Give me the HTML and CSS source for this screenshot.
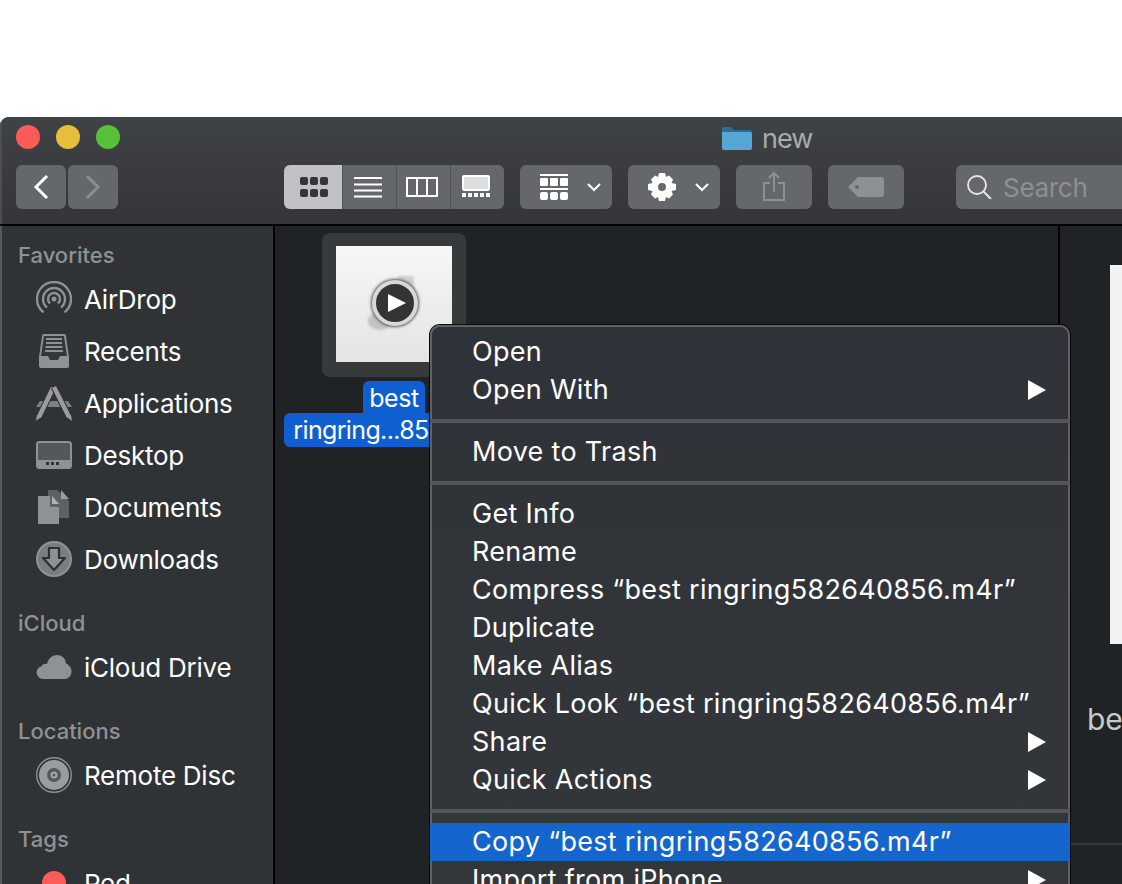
FILE: index.html
```html
<!DOCTYPE html>
<html lang="en">
<head>
<meta charset="utf-8">
<title>new</title>
<link rel="stylesheet" href="styles.css">
</head>
<body>
<div class="window">
  <header class="titlebar">
    <div class="title-row">
      <span class="light red"></span><span class="light yellow"></span><span class="light green"></span>
      <div class="title">
        <svg class="folder" viewBox="0 0 30 24"><path d="M0 3a2 2 0 0 1 2-2h7l3 3h16a2 2 0 0 1 2 2v2H0z" fill="#2d6f94"/><path d="M0 6h28a2 2 0 0 1 2 2v14a2 2 0 0 1-2 2H2a2 2 0 0 1-2-2z" fill="#56a7d4"/></svg>
        <span>new</span>
      </div>
    </div>
    <div class="toolbar">
      <div class="nav-group">
        <button class="btn nav"><svg class="i-nav" viewBox="0 0 16 26"><path d="M14 2 3 13l11 11" fill="none" stroke="#fff" stroke-width="3"/></svg></button>
        <button class="btn nav"><svg class="i-nav" viewBox="0 0 16 26"><path d="m2 2 11 11L2 24" fill="none" stroke="#8b8d8f" stroke-width="3"/></svg></button>
      </div>
      <div class="views">
        <button class="view active"><svg class="i-view" viewBox="0 0 32 24"><g fill="#33363a"><rect x="2" y="2" width="8" height="8" rx="2"/><rect x="12" y="2" width="8" height="8" rx="2"/><rect x="22" y="2" width="8" height="8" rx="2"/><rect x="2" y="14" width="8" height="8" rx="2"/><rect x="12" y="14" width="8" height="8" rx="2"/><rect x="22" y="14" width="8" height="8" rx="2"/></g></svg></button>
        <button class="view"><svg class="i-view" viewBox="0 0 32 24"><path d="M2 3h28M2 9.500h28M2 15.500h28M2 21.500h28" stroke="#fff" stroke-width="2"/></svg></button>
        <button class="view"><svg class="i-view" viewBox="0 0 32 24"><path d="M1 3h30v18H1zM11 3v18M21 3v18" fill="none" stroke="#fff" stroke-width="2"/></svg></button>
        <button class="view"><svg class="i-view" viewBox="0 0 32 24"><rect x="3" y="1" width="26" height="14" rx="1" fill="#dcdee0" stroke="#fff" stroke-width="2"/><g fill="#fff"><rect x="2" y="18" width="4" height="4"/><rect x="8" y="18" width="4" height="4"/><rect x="14" y="18" width="4" height="4"/><rect x="20" y="18" width="4" height="4"/><rect x="26" y="18" width="4" height="4"/></g></svg></button>
      </div>
      <button class="btn drop first-drop">
        <svg class="i-arr" viewBox="0 0 28 26"><g fill="#fff"><rect x="0" y="0" width="28" height="2"/><rect x="0" y="4" width="8" height="8" rx="1"/><rect x="10" y="4" width="8" height="8" rx="1"/><rect x="20" y="4" width="8" height="8" rx="1"/><rect x="0" y="14" width="28" height="2"/><rect x="0" y="18" width="8" height="8" rx="2"/><rect x="10" y="18" width="8" height="8" rx="2"/><rect x="20" y="18" width="8" height="8" rx="2"/></g></svg>
        <svg class="i-chev" viewBox="0 0 14 9"><path d="m1 1 6 6 6-6" fill="none" stroke="#fff" stroke-width="2"/></svg>
      </button>
      <button class="btn drop">
        <svg class="i-gear" viewBox="0 0 28 28"><path fill="#fff" fill-rule="evenodd" d="M11 0h6l1 4 3-1.500 4 4L23.500 10l4.500 1v6l-4.500 1 1.500 3.500-4 4L18 24l-1 4h-6l-1-4-3 1.500-4-4L4.500 18 0 17v-6l4.500-1L3 6.500l4-4L10 4zM14 10a4 4 0 1 0 0 8 4 4 0 0 0 0-8z"/></svg>
        <svg class="i-chev" viewBox="0 0 14 9"><path d="m1 1 6 6 6-6" fill="none" stroke="#fff" stroke-width="2"/></svg>
      </button>
      <button class="btn dim"><svg class="i-share" viewBox="0 0 22 30"><path d="M7 12H1v17h20V12h-6M11 21V2M6 7l5-5 5 5" fill="none" stroke="#8e9193" stroke-width="2"/></svg></button>
      <button class="btn dim"><svg class="i-tag" viewBox="0 0 36 20"><path fill="#8e9193" fill-rule="evenodd" d="M10 0h23a3 3 0 0 1 3 3v14a3 3 0 0 1-3 3H10L0 10zM9 8a2 2 0 1 0 0 4 2 2 0 0 0 0-4z"/></svg></button>
      <div class="search">
        <svg class="i-search" viewBox="0 0 26 24"><circle cx="10" cy="10" r="9" fill="none" stroke="#e6e7e8" stroke-width="1.800"/><path d="m16 16 8 8" stroke="#e6e7e8" stroke-width="2"/></svg>
        <span>Search</span>
      </div>
    </div>
  </header>

  <div class="body">
    <nav class="sidebar">
      <h2 class="sec">Favorites</h2>
      <ul class="list">
        <li class="item"><svg class="ico" viewBox="0 0 36 36"><g fill="none" stroke="#8f9295" stroke-width="2.400"><path d="M7.500 31.400A17 17 0 1 1 28.500 31.400"/><path d="M11 26.500A11 11 0 1 1 25 26.500"/><path d="M14 22.500A6 6 0 1 1 22 22.500"/></g><circle cx="18" cy="18" r="2.500" fill="#8f9295"/></svg>AirDrop</li>
        <li class="item"><svg class="ico" viewBox="0 0 36 36"><path fill="#8f9295" d="M6 3a2 2 0 0 1 2-2h20a2 2 0 0 1 2 2l3 21v9a2 2 0 0 1-2 2H5a2 2 0 0 1-2-2v-9z"/><path fill="#33363a" d="M8 3h20l3 20h-7l-2 4H14l-2-4H5z"/><path stroke="#8f9295" stroke-width="2" d="M10 6h16M10 10h16M9.500 14h17M9 18h18"/></svg>Recents</li>
        <li class="item"><svg class="ico" viewBox="0 0 36 36"><path fill="#7d8083" d="M4 16h28l4 6H0z"/><g fill="none" stroke-linecap="butt"><path d="M17 3 3 32" stroke="#303336" stroke-width="6.500"/><path d="M17 3 3 32" stroke="#9a9d9f" stroke-width="4.500"/><path d="M18 2 33 32" stroke="#303336" stroke-width="6.500"/><path d="M18 2 33 32" stroke="#9a9d9f" stroke-width="4.500"/></g><path fill="#9a9d9f" d="M1 30l4 2-5 4zM35 30l-4 2 5 4z"/></svg>Applications</li>
        <li class="item"><svg class="ico ico-desk" viewBox="0 0 36 28"><rect x="1" y="1" width="34" height="26" rx="2.500" fill="#55585b" stroke="#8f9295" stroke-width="2"/><path d="M1 19h34v5a3 3 0 0 1-3 3H4a3 3 0 0 1-3-3z" fill="#8f9295"/><path d="M10 21h3v3h-3zM15 21h3v3h-3zM20 21h3v3h-3z" fill="#303336"/></svg>Desktop</li>
        <li class="item"><svg class="ico" viewBox="0 0 36 36"><path fill="#5e6164" d="M12 1h9l12 11v17H12z"/><path fill="#9a9d9f" d="M25 1v9h8z"/><path fill="#8f9295" d="M2 7h12v11h9v17H2z"/><path fill="#b1b3b5" d="M16 7l7 8h-7z"/></svg>Documents</li>
        <li class="item"><svg class="ico" viewBox="0 0 36 36"><circle cx="18" cy="18" r="17" fill="#7a7d80" stroke="#8f9295" stroke-width="2"/><path d="M13 7h10v10h6L18 29 7 17h6z" fill="#8f9295" stroke="#2d3033" stroke-width="2.200" stroke-linejoin="round"/></svg>Downloads</li>
      </ul>
      <h2 class="sec">iCloud</h2>
      <ul class="list">
        <li class="item"><svg class="ico ico-cloud" viewBox="0 0 36 26"><path fill="#8f9295" d="M7 25a6.500 6.500 0 0 1-1.500-12.800C7 10 9 9.500 11 10c1-5 5-9 10-9 5 0 8.500 3.500 9 8.500 3 1.500 5.500 4 5.500 8 0 4-3 7.500-7 7.500z"/></svg>iCloud Drive</li>
      </ul>
      <h2 class="sec">Locations</h2>
      <ul class="list">
        <li class="item"><svg class="ico" viewBox="0 0 36 36"><circle cx="18" cy="18" r="17.300" fill="#303336" stroke="#8f9295" stroke-width="1.400"/><circle cx="18" cy="18" r="15" fill="#9a9d9f"/><circle cx="18" cy="18" r="7" fill="#55585b"/><circle cx="18" cy="18" r="3.500" fill="#a5a7a9"/><circle cx="18" cy="18" r="1.500" fill="#55585b"/></svg>Remote Disc</li>
      </ul>
      <h2 class="sec">Tags</h2>
      <ul class="list">
        <li class="item"><span class="tagdot"></span>Red</li>
      </ul>
    </nav>

    <main class="files">
      <figure class="file">
        <div class="tile">
          <div class="thumb">
            <span class="note-a"></span><span class="note-b"></span>
            <span class="play"><svg class="i-play" viewBox="0 0 18 18"><path d="M0 0l18 9L0 18z" fill="#fff"/></svg></span>
          </div>
        </div>
        <figcaption class="label"><span class="l1">best</span><span class="l2">ringring...856.m4r</span></figcaption>
      </figure>
    </main>

    <aside class="preview">
      <div class="sheet"></div>
      <div class="fname">best ringring582640856.m4r</div>
      <div class="rule"></div>
    </aside>
  </div>

  <ul class="menu">
    <li class="mi">Open</li>
    <li class="mi sub">Open With</li>
    <li class="sep"></li>
    <li class="mi">Move to Trash</li>
    <li class="sep"></li>
    <li class="mi">Get Info</li>
    <li class="mi">Rename</li>
    <li class="mi">Compress “best ringring582640856.m4r”</li>
    <li class="mi">Duplicate</li>
    <li class="mi">Make Alias</li>
    <li class="mi">Quick Look “best ringring582640856.m4r”</li>
    <li class="mi sub">Share</li>
    <li class="mi sub">Quick Actions</li>
    <li class="sep"></li>
    <li class="mi hl">Copy “best ringring582640856.m4r”</li>
    <li class="mi sub">Import from iPhone</li>
  </ul>
</div>
</body>
</html>
```

FILE: styles.css
```css
* { box-sizing: border-box; }
html, body { margin: 0; height: 100%; overflow: hidden; background: #fff; }
body { padding-top: 117px; font-family: Inter, "Liberation Sans", sans-serif; }
button { border: 0; padding: 0; margin: 0; font: inherit; }
ul { list-style: none; margin: 0; padding: 0; }
svg { display: block; }

.window { position: relative; width: 1122px; height: 767px; overflow: hidden; border-radius: 9px 0 0 0; background: #303336; }

.titlebar { height: 109px; border-bottom: 2px solid #000; background: linear-gradient(#404346, #333537); box-shadow: inset 2px 0 0 #4c4f52; }
.title-row { height: 48px; display: flex; align-items: center; padding-left: 16px; gap: 16px; }
.light { flex: none; width: 24px; height: 24px; border-radius: 50%; margin-top: -8px; }
.red { background: #fc5b57; }
.yellow { background: #e5bf3c; }
.green { background: #57c038; }
.title { flex: none; display: flex; align-items: center; gap: 10px; margin-left: 586px; margin-top: -6px; font-size: 27px; color: #a9abad; letter-spacing: -1px; }
.folder { width: 30px; height: 24px; }

.toolbar { display: flex; align-items: stretch; height: 44px; padding-left: 16px; }
.btn { flex: none; display: flex; align-items: center; justify-content: center; height: 44px; border-radius: 6px; background: #65686b; }
.nav-group { flex: none; display: flex; gap: 2px; margin-right: 166px; }
.nav { width: 50px; }
.i-nav { width: 16px; height: 26px; }
.views { flex: none; display: flex; width: 220px; border-radius: 6px; overflow: hidden; margin-right: 16px; gap: 1px; background: #515457; }
.view { flex: 1; display: flex; align-items: center; justify-content: center; padding-right: 3px; background: #65686b; }
.view.active { flex: 0 0 58px; padding: 0 0 0 2px; background: #c0c2c5; }
.i-view { width: 32px; height: 24px; }
.drop { width: 92px; margin-right: 16px; gap: 19px; justify-content: flex-start; padding-left: 20px; }
.i-arr { width: 28px; height: 26px; }
.i-gear { width: 28px; height: 28px; }
.i-chev { width: 14px; height: 9px; }
.dim { width: 76px; margin-right: 16px; }
.i-share { width: 22px; height: 30px; margin-top: -2px; }
.i-tag { width: 36px; height: 20px; }
.search { flex: none; display: flex; align-items: center; gap: 10px; width: 200px; margin-left: 36px; padding-left: 11px; border-radius: 6px; background: #65686b; font-size: 26px; color: #8d9092; letter-spacing: -0.3px; }
.i-search { width: 26px; height: 24px; }

.body { display: flex; height: 658px; }

.sidebar { flex: 0 0 275px; padding: 12px 0 0 16px; border-left: 2px solid #55585b; border-right: 2px solid #000; background: #303336; color: #fff; }
.sec { margin: 0; height: 34px; line-height: 34px; font-size: 22px; font-weight: 500; color: #8f9295; }
.list { margin-top: 2px; margin-bottom: 20px; }
.item { display: flex; align-items: center; gap: 12px; height: 52px; padding-bottom: 2px; margin-left: 18px; font-size: 26px; letter-spacing: -0.25px; white-space: nowrap; }
.ico { flex: none; width: 36px; height: 36px; }
.ico-desk { height: 28px; }
.ico-cloud { height: 26px; }
.tagdot { flex: none; width: 24px; height: 24px; margin: 0 6px; border-radius: 50%; background: #fc5b57; }

.files { flex: 0 0 785px; background: #1f2326; border-right: 2px solid #000; padding-top: 7px; }
.file { width: 220px; margin: 0 0 0 9px; display: flex; flex-direction: column; align-items: center; }
.tile { width: 144px; height: 144px; padding: 13px 14px; border-radius: 8px; background: #373a3b; }
.thumb { position: relative; width: 116px; height: 116px; display: flex; align-items: center; justify-content: center; background: linear-gradient(#f7f7f7, #e4e4e4); }
.note-a { position: absolute; left: 32px; top: 66px; width: 24px; height: 18px; border-radius: 50%; background: #c4c4c4; filter: blur(1px); }
.note-b { position: absolute; left: 62px; top: 30px; width: 16px; height: 40px; background: #cfcfcf; filter: blur(1px); }
.play { position: relative; display: flex; align-items: center; justify-content: center; width: 46px; height: 46px; margin: -2px 0 0 2px; border-radius: 50%; background: #343434; border: 4px solid #d8d8d8; box-shadow: 0 0 3px 1px #555; }
.i-play { width: 18px; height: 18px; margin-left: 3px; }
.label { display: flex; flex-direction: column; align-items: center; margin-top: 4px; font-size: 25px; color: #fff; letter-spacing: -0.45px; }
.l1 { height: 32px; line-height: 34px; padding: 0 6px; border-radius: 6px 6px 0 0; background: #0f5fd0; }
.l2 { height: 34px; line-height: 34px; padding: 0 9px; border-radius: 6px; background: #0f5fd0; white-space: nowrap; letter-spacing: -0.65px; }

.preview { flex: 1; min-width: 0; padding-top: 39px; background: #1f2326; overflow: hidden; }
.sheet { width: 120px; height: 379px; margin-left: 50px; background: #f2f2f2; }
.fname { margin: 57px 0 0 27px; height: 36px; line-height: 36px; font-size: 30px; color: #c8c9ca; white-space: nowrap; }
.rule { height: 2px; margin-top: 106px; background: #35383a; }

.menu { position: absolute; left: 430px; top: 208px; width: 640px; padding: 8px 0; border-radius: 10px 10px 0 0; background: linear-gradient(#2f3339, #33373a); box-shadow: inset 0 0 0 2px #5e6266, 0 0 0 1px #0a0a0a; color: #fff; font-size: 27px; }
.mi { position: relative; height: 38px; line-height: 38px; padding-left: 42px; white-space: nowrap; letter-spacing: 0.3px; }
.sub::after { content: ""; position: absolute; right: 24px; top: 9px; border-left: 18px solid #fff; border-top: 10px solid transparent; border-bottom: 10px solid transparent; }
.sep { height: 24px; padding-top: 10px; }
.sep::before { content: ""; display: block; height: 4px; background: #53575a; }
.hl { background: #1465cd; }
```
